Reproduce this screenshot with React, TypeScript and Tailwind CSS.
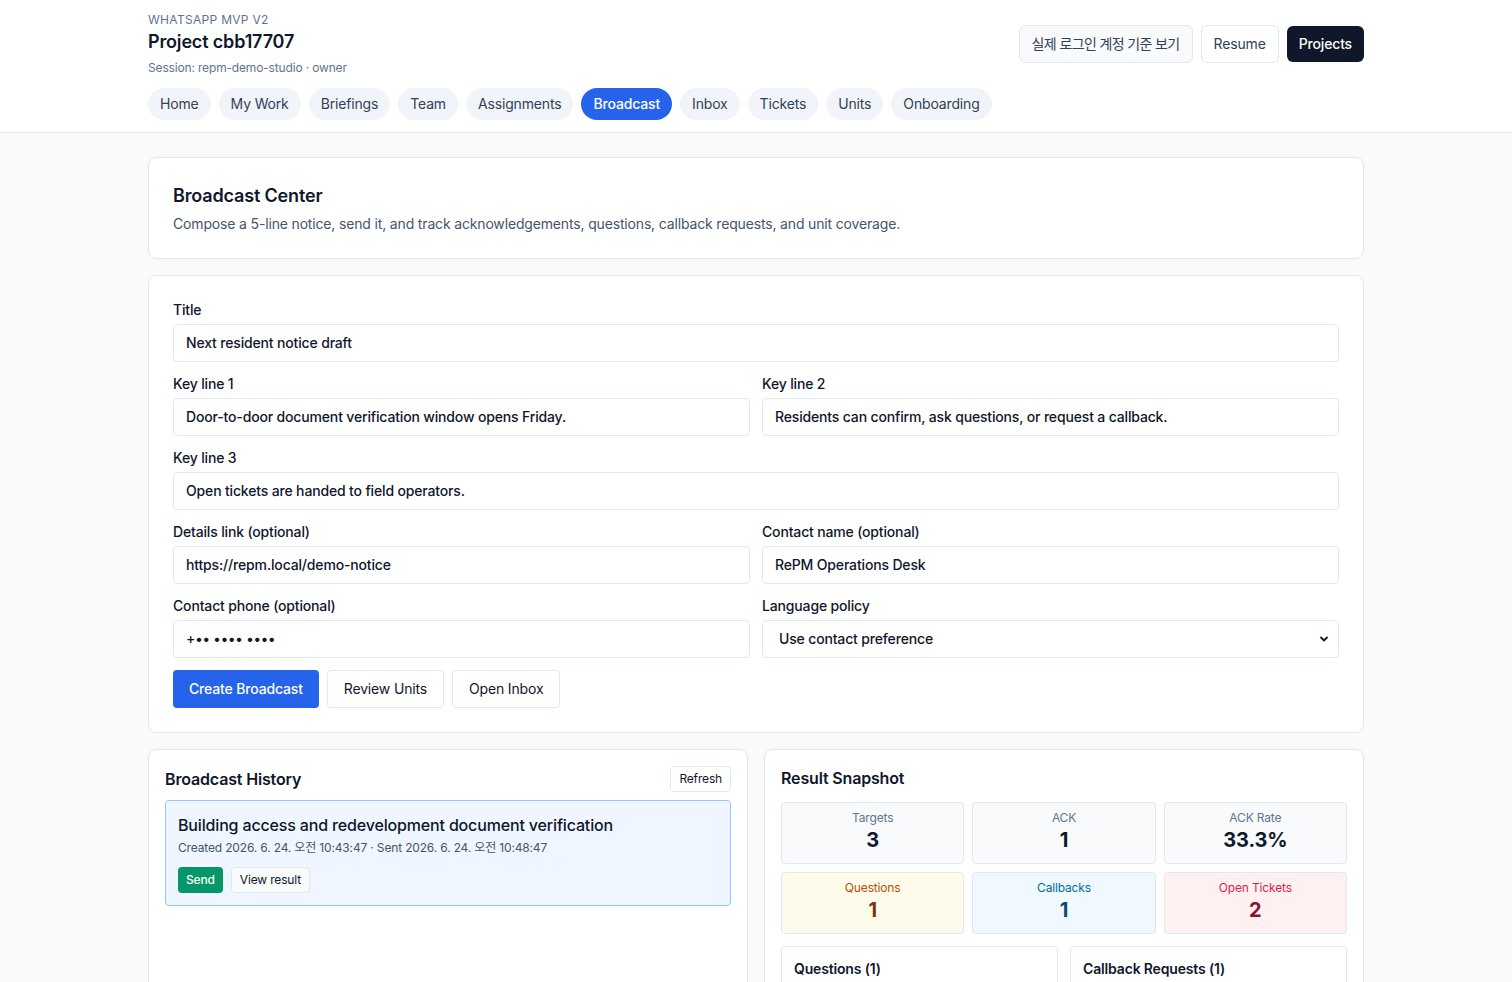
import React from 'react';

const navItems = ['Home', 'My Work', 'Briefings', 'Team', 'Assignments', 'Broadcast', 'Inbox', 'Tickets', 'Units', 'Onboarding'];

const Field: React.FC<{ label: string; value: string; select?: boolean }> = ({ label, value, select }) => (
    <div className="flex flex-col gap-1">
        <label className="text-sm font-medium text-slate-900">{label}</label>
        {select ? (
            <div className="flex items-center justify-between h-[38px] rounded border border-slate-200 bg-white pl-4 pr-2 text-sm font-medium text-slate-900">
                <span>{value}</span>
                <svg width="12" height="12" viewBox="0 0 12 12" fill="none" stroke="#111827" strokeWidth="1.8" strokeLinecap="round" strokeLinejoin="round">
                    <path d="M3 4.5l3 3 3-3" />
                </svg>
            </div>
        ) : (
            <div className="flex items-center h-[38px] rounded border border-slate-200 bg-white px-3 text-sm font-medium text-slate-900">
                {value}
            </div>
        )}
    </div>
);

const Stat: React.FC<{ label: string; value: string; tone: string; labelTone: string; valueTone: string }> = ({ label, value, tone, labelTone, valueTone }) => (
    <div className={`flex flex-col items-center h-[62px] pt-[7px] rounded border border-slate-200 ${tone}`}>
        <span className={`text-xs ${labelTone}`}>{label}</span>
        <span className={`text-xl font-bold leading-7 ${valueTone}`}>{value}</span>
    </div>
);

export default function App() {
    return (
        <div className="min-h-screen bg-[#f8fafc] text-slate-900 tracking-[-0.01em]" style={{ fontFamily: 'Inter, "Noto Sans CJK KR", sans-serif' }}>
            <header className="bg-white border-b border-slate-200">
                <div className="max-w-7xl mx-auto px-8 pt-3 pb-3">
                    <div className="flex items-start justify-between">
                        <div>
                            <div className="text-xs uppercase tracking-wide text-slate-500">WhatsApp MVP v2</div>
                            <h1 className="text-lg font-semibold leading-6 mt-[2px]">Project cbb17707</h1>
                            <div className="text-xs text-slate-500 mt-[6px]">Session: repm-demo-studio · owner</div>
                        </div>
                        <div className="flex gap-2 mt-[13px]">
                            <button className="h-[38px] px-3 rounded-md border border-slate-200 bg-[#f8fafc] text-sm text-slate-700 tracking-[-0.045em]">실제 로그인 계정 기준 보기</button>
                            <button className="h-[38px] px-3 rounded-md border border-slate-200 bg-white text-sm text-slate-700">Resume</button>
                            <button className="h-[36px] mt-[1px] px-3 rounded-md bg-[#0f172a] text-sm font-medium text-white">Projects</button>
                        </div>
                    </div>
                    <nav className="flex gap-2 mt-[12px]">
                        {navItems.map((item) => (
                            <span
                                key={item}
                                className={
                                    item === 'Broadcast'
                                        ? 'h-[32px] flex items-center px-3 rounded-full bg-[#2563eb] text-sm font-medium text-white'
                                        : 'h-[32px] flex items-center px-3 rounded-full bg-slate-100 text-sm text-slate-700'
                                }
                            >
                                {item}
                            </span>
                        ))}
                    </nav>
                </div>
            </header>

            <main className="max-w-7xl mx-auto px-8 pt-6 pb-10 flex flex-col gap-4">
                <section className="bg-white border border-slate-200 rounded-lg px-6 pt-6 pb-6">
                    <h2 className="text-lg font-semibold leading-7">Broadcast Center</h2>
                    <p className="text-sm text-slate-600 mt-1">
                        Compose a 5-line notice, send it, and track acknowledgements, questions, callback requests, and unit coverage.
                    </p>
                </section>

                <section className="bg-white border border-slate-200 rounded-lg p-6 flex flex-col gap-3">
                    <Field label="Title" value="Next resident notice draft" />
                    <div className="grid grid-cols-2 gap-3">
                        <Field label="Key line 1" value="Door-to-door document verification window opens Friday." />
                        <Field label="Key line 2" value="Residents can confirm, ask questions, or request a callback." />
                    </div>
                    <Field label="Key line 3" value="Open tickets are handed to field operators." />
                    <div className="grid grid-cols-2 gap-3">
                        <Field label="Details link (optional)" value="https://repm.local/demo-notice" />
                        <Field label="Contact name (optional)" value="RePM Operations Desk" />
                    </div>
                    <div className="grid grid-cols-2 gap-3">
                        <Field label="Contact phone (optional)" value="+•• •••• ••••" />
                        <Field label="Language policy" value="Use contact preference" select />
                    </div>
                    <div className="flex gap-2">
                        <button className="h-[38px] px-4 rounded bg-[#2563eb] text-sm font-medium text-white">Create Broadcast</button>
                        <button className="h-[38px] px-4 rounded border border-slate-200 bg-white text-sm text-slate-900">Review Units</button>
                        <button className="h-[38px] px-4 rounded border border-slate-200 bg-white text-sm text-slate-900">Open Inbox</button>
                    </div>
                </section>

                <div className="grid grid-cols-2 gap-4">
                    <section className="bg-white border border-slate-200 rounded-lg p-4">
                        <div className="flex items-center justify-between">
                            <h3 className="text-base font-semibold">Broadcast History</h3>
                            <button className="h-[26px] px-2 rounded border border-slate-200 bg-white text-xs text-slate-900">Refresh</button>
                        </div>
                        <div className="mt-2 rounded border border-[#93c5fd] bg-[#eff6ff] px-3 pt-3 pb-3">
                            <div className="text-base font-medium text-slate-900">Building access and redevelopment document verification</div>
                            <div className="text-xs text-slate-600 mt-[3px]">
                                Created 2026. 6. 24. 오전 10:43:47 · Sent 2026. 6. 24. 오전 10:48:47
                            </div>
                            <div className="flex gap-2 mt-[11px]">
                                <button className="h-[26px] px-2 rounded bg-[#059669] text-xs font-medium text-white">Send</button>
                                <button className="h-[26px] px-2 rounded border border-slate-200 bg-[#f8fafc] text-xs text-slate-900">View result</button>
                            </div>
                        </div>
                    </section>

                    <section className="bg-white border border-slate-200 rounded-lg p-4">
                        <h3 className="text-base font-semibold">Result Snapshot</h3>
                        <div className="grid grid-cols-3 gap-2 mt-3">
                            <Stat label="Targets" value="3" tone="bg-[#f8fafc]" labelTone="text-slate-500" valueTone="text-slate-900" />
                            <Stat label="ACK" value="1" tone="bg-[#f8fafc]" labelTone="text-slate-500" valueTone="text-slate-900" />
                            <Stat label="ACK Rate" value="33.3%" tone="bg-[#f8fafc]" labelTone="text-slate-500" valueTone="text-slate-900" />
                            <Stat label="Questions" value="1" tone="bg-[#fffbeb]" labelTone="text-[#b45309]" valueTone="text-[#78350f]" />
                            <Stat label="Callbacks" value="1" tone="bg-[#f0f9ff]" labelTone="text-[#0369a1]" valueTone="text-[#0c4a6e]" />
                            <Stat label="Open Tickets" value="2" tone="bg-[#fff1f2]" labelTone="text-[#e11d48]" valueTone="text-[#881337]" />
                        </div>
                        <div className="grid grid-cols-2 gap-3 mt-3">
                            <div className="rounded border border-slate-200 bg-white p-3">
                                <h4 className="text-sm font-semibold">Questions (1)</h4>
                                <div className="text-xs text-slate-600 mt-2">Unit 102 · When does the verification window close?</div>
                            </div>
                            <div className="rounded border border-slate-200 bg-white p-3">
                                <h4 className="text-sm font-semibold">Callback Requests (1)</h4>
                                <div className="text-xs text-slate-600 mt-2">Unit 204 · Requested a call this afternoon.</div>
                            </div>
                        </div>
                    </section>
                </div>
            </main>
        </div>
    );
}
